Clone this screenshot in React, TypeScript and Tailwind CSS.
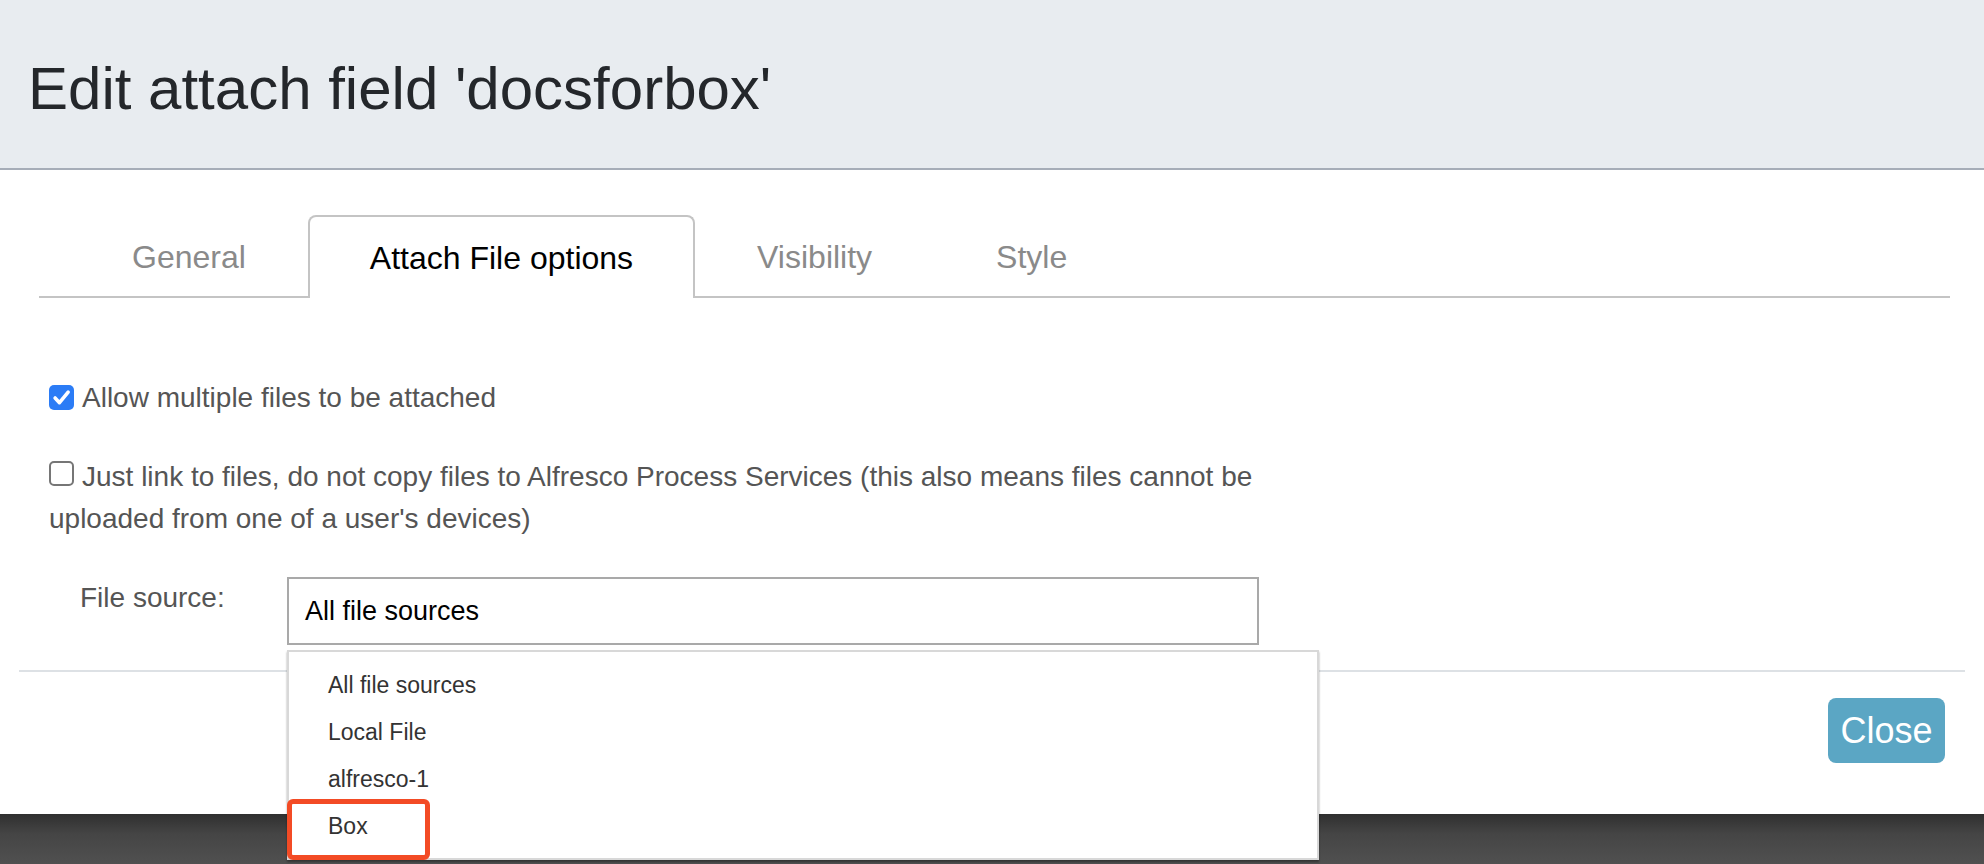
import React from "react";

const tabs = ["General", "Attach File options", "Visibility", "Style"];

function Check({ checked }: { checked: boolean }) {
  if (checked) {
    return (
      <span className="mr-[8px] inline-flex h-[25px] w-[25px] items-center justify-center rounded-[5px] bg-[#2b7cf6] align-baseline">
        <svg width="19" height="19" viewBox="0 0 16 16" fill="none">
          <path d="M2.6 8.4 L6.3 12.4 L13.6 3.4" stroke="#ffffff" strokeWidth="3" strokeLinecap="round" strokeLinejoin="round" />
        </svg>
      </span>
    );
  }
  return (
    <span className="mr-[8px] inline-block h-[25px] w-[25px] rounded-[5px] border-2 border-[#767676] bg-white align-baseline" />
  );
}

export default function App() {
  return (
    <div
      className="flex h-[864px] w-[1984px] flex-col overflow-hidden bg-white"
      style={{ fontFamily: '"Liberation Sans", Arial, Helvetica, sans-serif' }}
    >
      {/* Header */}
      <div className="h-[170px] shrink-0 border-b-2 border-[#a6adb8] bg-[#e8ecf0] pl-[28px] pt-[59px]">
        <h1 className="text-[60px] leading-[60px] text-[#24272b]">Edit attach field 'docsforbox'</h1>
      </div>

      {/* Body */}
      <div className="relative z-10 h-[500px] shrink-0">
        <div className="ml-[39px] mr-[34px] mt-[45px] flex h-[83px] border-b-2 border-[#c4c4c4] pl-[31px]">
          {tabs.map((t, i) => (
            <div
              key={t}
              className={
                i === 1
                  ? "-mb-[2px] flex h-[83px] items-center rounded-t-[8px] border-2 border-b-0 border-[#c4c4c4] bg-white px-[60px] text-[32px] text-[#000000]"
                  : "-mb-[2px] flex h-[83px] items-center border-2 border-transparent px-[60px] text-[32px] text-[#8a8a8a]"
              }
            >
              {t}
            </div>
          ))}
        </div>

        <div className="ml-[49px] mt-[79px] w-[1210px] text-[28px] leading-[42px] text-[#555555]">
          <div>
            <Check checked={true} />
            Allow multiple files to be attached
          </div>
          <div className="mt-[37px]">
            <Check checked={false} />
            Just link to files, do not copy files to Alfresco Process Services (this also means files cannot be uploaded from one of a user's devices)
          </div>
          <div className="mt-[37px] flex items-start">
            <div className="w-[238px] pl-[31px]">File source:</div>
            <div className="relative">
              <div className="flex h-[68px] w-[972px] items-center border-2 border-[#a9a9a9] bg-white pl-[16px] text-[27px] text-[#000000]">
                All file sources
              </div>
              <div className="absolute left-0 top-[73px] z-20 h-[210px] w-[1032px] border-2 border-[#d8d8d8] bg-white pt-[10px] text-[23px] leading-[47px] text-[#333333] shadow-[0_2px_2px_rgba(0,0,0,0.35)]">
                <div className="h-[47px] pl-[39px]">All file sources</div>
                <div className="h-[47px] pl-[39px]">Local File</div>
                <div className="h-[47px] pl-[39px]">alfresco-1</div>
                <div className="h-[47px] pl-[39px]">Box</div>
                <div className="absolute left-[-2px] top-[147px] h-[61px] w-[143px] rounded-[6px] border-[5px] border-[#f34b25]" />
              </div>
            </div>
          </div>
        </div>
      </div>

      {/* Footer */}
      <div className="mx-[19px] flex h-[144px] shrink-0 justify-end border-t-2 border-[#dde1e5] pr-[20px] pt-[26px]">
        <button className="flex h-[65px] w-[117px] items-center justify-center rounded-[8px] bg-[#5ba6c4] text-[36px] text-white">
          Close
        </button>
      </div>

      {/* Backdrop */}
      <div className="h-[50px] shrink-0 bg-[linear-gradient(180deg,#2f2f2f_0%,#454545_40%,#505050_100%)]" />
    </div>
  );
}
